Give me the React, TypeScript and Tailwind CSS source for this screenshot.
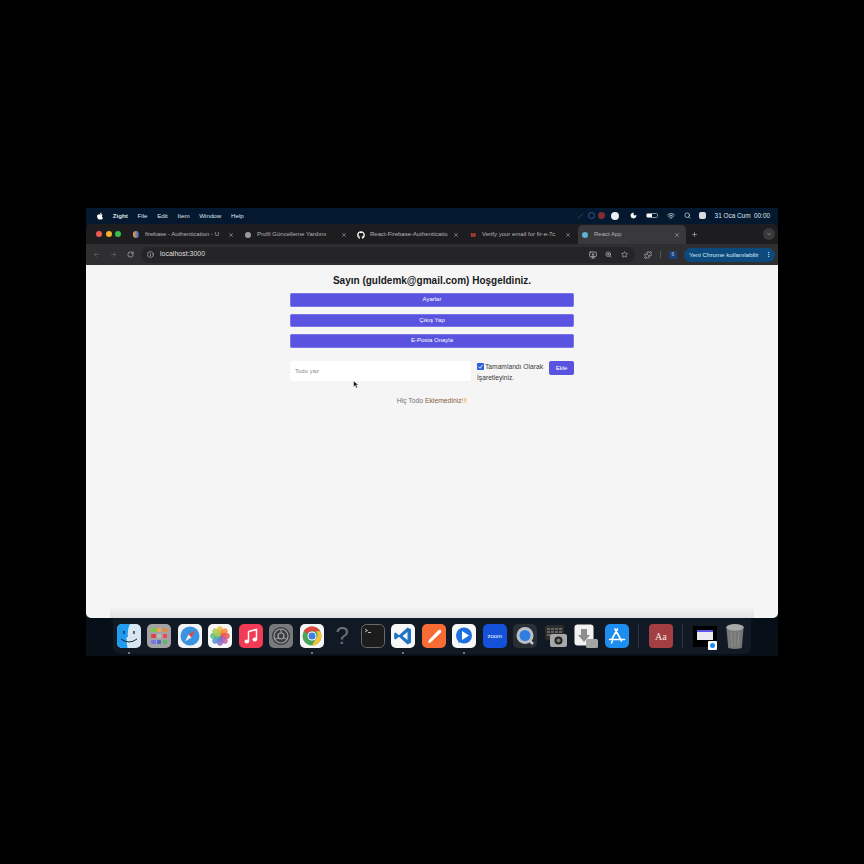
import React from "react";
import { FaApple, FaGithub } from "react-icons/fa";
import {
  X, Plus, ChevronDown, ArrowLeft, ArrowRight, RotateCw, Info, ZoomIn, Star, Puzzle, MoreVertical, Search, Wifi, Moon, MonitorDown,
} from "lucide-react";

const Tab = ({ icon, title, active, w }: { icon: React.ReactNode; title: string; active?: boolean; w: string }) => (
  <div className={`flex h-[19px] shrink-0 items-center gap-[5px] rounded-t-[5px] pl-[3px] ${w} ${active ? "bg-[#39393b] pr-[6px]" : "pr-[7px]"}`}>
    <span className="flex w-[8px] shrink-0 justify-center">{icon}</span>
    <span className="min-w-0 flex-1 overflow-hidden whitespace-nowrap text-[6px] text-[#b4b4b6]">{title}</span>
    <X size={6} className="shrink-0 text-[#c0c0c0]" />
  </div>
);

const Btn = ({ children }: { children: React.ReactNode }) => (
  <div className="flex h-[13.500px] items-center justify-center rounded-[1.500px] border-[0.500px] border-[#7b75e8] bg-[#5a53e0] text-[6px] text-white">{children}</div>
);

const Finder = () => (
  <svg viewBox="0 0 24 24" className="h-6 w-6">
    <rect width="24" height="24" rx="5" fill="#d8e6f2" />
    <path d="M0 5a5 5 0 0 1 5-5h8q-3 6-2 13H9.500q0 6 1 11H5a5 5 0 0 1-5-5z" fill="#1f9cf0" />
    <path d="M4 15q8 6 16 0" stroke="#123" fill="none" />
    <path d="M7 7v3M17 7v3" stroke="#123" strokeWidth="1.300" />
  </svg>
);
const Launchpad = () => {
  const c = ["#7c4","#ea4","#e83","#d44","#bbb","#e45","#77d","#56c","#5b6"];
  return (
    <div className="grid h-6 w-6 grid-cols-3 gap-[1.5px] rounded-[5px] bg-[#a3a3a5] p-[4px]">
      {c.map((x) => <span key={x} className="rounded-[1px]" style={{ background: x }} />)}
    </div>
  );
};
const Safari = () => (
  <svg viewBox="0 0 24 24" className="h-6 w-6">
    <rect width="24" height="24" rx="5" fill="#f2f3f4" />
    <circle cx="12" cy="12" r="9.500" fill="#3a93e0" />
    <path d="M17 6.500l-6.500 4 3 3z" fill="#e8453c" />
    <path d="M7 17.500l3.500-7 3 3z" fill="#eee" />
  </svg>
);
const Photos = () => (
  <svg viewBox="0 0 24 24" className="h-6 w-6">
    <rect width="24" height="24" rx="5" fill="#f7f7f7" />
    {["#f6b73c","#f28c38","#e9574f","#c65aa0","#8a68c8","#4f8fdc","#5cb88a","#a8cf4f"].map((c, i) => (
      <ellipse key={c} cx="12" cy="7" rx="3.200" ry="4.800" fill={c} opacity="0.850" transform={`rotate(${i * 45} 12 12)`} />
    ))}
  </svg>
);
const Music = () => (
  <svg viewBox="0 0 24 24" className="h-6 w-6">
    <rect width="24" height="24" rx="5" fill="#f23c55" />
    <path d="M9.500 7.500l8-2v10" stroke="#fff" strokeWidth="1.500" fill="none" />
    <path d="M9.500 7.500v10" stroke="#fff" strokeWidth="1.500" />
    <ellipse cx="7.800" cy="17.500" rx="2.300" ry="1.900" fill="#fff" />
    <ellipse cx="15.800" cy="15.500" rx="2.300" ry="1.900" fill="#fff" />
  </svg>
);
const Settings = () => (
  <svg viewBox="0 0 24 24" className="h-6 w-6">
    <rect width="24" height="24" rx="5" fill="#77797c" />
    <circle cx="12" cy="12" r="9" fill="#3c3d40" />
    <circle cx="12" cy="12" r="7" fill="none" stroke="#a2a3a6" strokeWidth="1.200" />
    <circle cx="12" cy="12" r="3" fill="none" stroke="#a2a3a6" strokeWidth="1.200" />
    <path d="M12 5v4M6 15.500l3.500-2M18 15.500l-3.500-2" stroke="#a2a3a6" />
  </svg>
);
const Chrome = () => (
  <svg viewBox="0 0 24 24" className="h-6 w-6">
    <rect width="24" height="24" rx="5" fill="#f5f5f5" />
    <circle cx="12" cy="12" r="9.500" fill="#4aa35a" />
    <path d="M12 2.500a9.500 9.500 0 0 1 8.200 4.800H12a4.700 4.700 0 0 0-4.300 2.700L3.900 7A9.500 9.500 0 0 1 12 2.500z" fill="#e0483d" />
    <path d="M20.200 7.300A9.500 9.500 0 0 1 12 21.500l4-7a4.700 4.700 0 0 0 0-7.200z" fill="#f5c33b" />
    <circle cx="12" cy="12" r="4.500" fill="#fff" />
    <circle cx="12" cy="12" r="3.500" fill="#3b7fe0" />
  </svg>
);
const Term = () => (
  <svg viewBox="0 0 24 24" className="h-6 w-6">
    <rect x="0.500" y="0.500" width="23" height="23" rx="5" fill="#1c1c1c" stroke="#6a6a6a" />
    <path d="M4 5l2.500 1.500L4 8" stroke="#ddd" strokeWidth="0.800" fill="none" />
    <path d="M7 8.500h3" stroke="#ddd" strokeWidth="0.800" />
  </svg>
);
const VSCode = () => (
  <svg viewBox="0 0 24 24" className="h-6 w-6">
    <rect width="24" height="24" rx="5" fill="#f7f7f7" />
    <path d="M16.500 3.500l3.500 1.800v13.400l-3.500 1.800-8.500-7.800-3.500 2.800-1.300-.800v-5.400l1.300-.800 3.500 2.800zM16.500 8l-5 4 5 4z" fill="#1f73c4" />
  </svg>
);
const Postman = () => (
  <svg viewBox="0 0 24 24" className="h-6 w-6">
    <rect width="24" height="24" rx="5" fill="#f76b35" />
    <path d="M6 19l1-3L16 6.500q2-1.500 3 0t-1 3L8.500 18.500z" fill="#fff" />
  </svg>
);
const Beam = () => (
  <svg viewBox="0 0 24 24" className="h-6 w-6">
    <rect width="24" height="24" rx="5" fill="#f7f7f7" />
    <circle cx="12" cy="11.500" r="8" fill="#1f6fe0" />
    <path d="M6 20l1.500-5h3z" fill="#1f6fe0" />
    <path d="M10 7l7 4.500-7 4.500z" fill="#fff" />
  </svg>
);
const Zoom = () => (
  <div className="flex h-6 w-6 items-center justify-center rounded-[5px] bg-[#1550d8] text-[6px] text-white">zoom</div>
);
const QuickTime = () => (
  <svg viewBox="0 0 24 24" className="h-6 w-6">
    <rect width="24" height="24" rx="5" fill="#2a2f35" />
    <circle cx="12" cy="11.500" r="8.500" fill="#b9c0c8" />
    <circle cx="12" cy="11.500" r="5.500" fill="#2f7fe0" />
    <path d="M16 16l4 4" stroke="#c2c6cc" strokeWidth="2.500" />
  </svg>
);
const Capture = () => (
  <svg viewBox="0 0 24 24" className="h-6 w-6">
    <rect x="1" y="1" width="19" height="15" rx="3" fill="#2d2d2d" />
    <path d="M3 5h15M3 8h15M3 11h8" stroke="#999" strokeWidth="1.200" strokeDasharray="3 1" />
    <rect x="6" y="10" width="17" height="13" rx="2" fill="#a8a8a8" />
    <circle cx="14.500" cy="16.500" r="4" fill="#222" />
    <circle cx="14.500" cy="16.500" r="2" fill="#777" />
  </svg>
);
const Downloads = () => (
  <svg viewBox="0 0 24 24" className="h-6 w-6">
    <rect x="0.500" y="0.500" width="19" height="21" rx="3" fill="#f2f2f2" />
    <path d="M7 5h6v6h3l-6 7-6-7h3z" fill="#8e8e8e" />
    <rect x="12" y="15" width="12" height="9" rx="1.500" fill="#a5a5a5" />
  </svg>
);
const AppStore = () => (
  <svg viewBox="0 0 24 24" className="h-6 w-6">
    <rect width="24" height="24" rx="5" fill="#1d8df0" />
    <path d="M12.500 5L7 15M10 5l6.500 12M4.500 15.500h15M6.500 19l1-2" stroke="#fff" strokeWidth="1.600" strokeLinecap="round" />
  </svg>
);
const Dict = () => (
  <div className="relative flex h-6 w-6 items-center justify-center rounded-[4px] bg-[#a33f42] font-['Liberation_Serif',serif] text-[10px] text-[#f6e4e4]">Aa</div>
);
const Thumb = () => (
  <div className="relative flex h-[21px] w-[26px] items-center justify-center bg-black">
    <div className="mb-[3px] h-[10px] w-[16px] bg-[#e9e9ef]">
      <div className="h-[2px] bg-[#5c55e6]" />
    </div>
    <span className="absolute -bottom-[3px] right-0 flex h-[9px] w-[9px] items-center justify-center rounded-[1px] bg-white">
      <span className="h-[5px] w-[5px] rounded-full bg-[#1d8df0]" />
    </span>
  </div>
);
const Trash = () => (
  <svg viewBox="0 0 24 28" className="h-[27px] w-6">
    <path d="M3 4h18l-2 22q-7 2-14 0z" fill="#777" />
    <ellipse cx="12" cy="4.500" rx="9" ry="3.500" fill="#aaa" />
    <path d="M8 9l1 16M12 9v16M16 9l-1 16" stroke="#8e8e8e" />
  </svg>
);

const DockItem = ({ children, dot }: { children: React.ReactNode; dot?: boolean }) => (
  <div className="relative flex h-6 w-6 shrink-0 items-center justify-center">
    {children}
    {dot && <span className="absolute -bottom-[6px] left-[11px] h-[2px] w-[2px] rounded-full bg-[#9a9a9a]" />}
  </div>
);

export default function App() {
  return (
    <div className="h-[864px] w-[864px] overflow-hidden bg-black pl-[86px] pt-[208px] font-['Liberation_Sans',sans-serif]">
      <div className="flex h-[448px] w-[692px] flex-col overflow-hidden bg-gradient-to-b from-[#04182f] to-[#070f17]">
        {/* Menu bar */}
        <div className="flex h-[16px] shrink-0 items-center justify-between pl-[10px] pr-[8px] text-[6.200px] text-[#dfe5ea]">
          <div className="flex items-center gap-[9.700px]">
            <FaApple size={8} className="mr-[-1px] text-white" />
            <span className="font-bold">Zight</span>
            <span>File</span>
            <span>Edit</span>
            <span>Item</span>
            <span>Window</span>
            <span>Help</span>
          </div>
          <div className="flex items-center">
            <svg viewBox="0 0 10 10" className="mr-[3.500px] h-2 w-2"><path d="M1 8l7-6" stroke="#2f4a66" /></svg>
            <span className="mr-[3px] h-[7px] w-[7px] rounded-full border border-[#2f5a96]" />
            <span className="mr-[5.500px] h-[7px] w-[7px] rounded-full bg-[#7f2e30]" />
            <span className="mr-[11.500px] h-[8px] w-[8px] rounded-full bg-[#e8edf2]" />
            <Moon size={7} className="mr-[8.500px] fill-white text-white" />
            <span className="mr-[9px] flex h-[5px] w-[12px] rounded-[1.500px] border border-[#8a929a]"><span className="w-[5px] bg-white" /></span>
            <Wifi size={8} className="mr-[9.500px] text-white" />
            <Search size={7} className="mr-[8px] text-white" />
            <span className="mr-[8.500px] h-[7px] w-[7px] rounded-[2px] bg-[#d8dde2]" />
            <span className="whitespace-nowrap text-[6.400px]">31 Oca Cum&nbsp;&nbsp;00:00</span>
          </div>
        </div>

        {/* Browser */}
        <div className="flex h-[394px] shrink-0 flex-col overflow-hidden rounded-[5px]">
          {/* Tab strip */}
          <div className="flex h-[20px] shrink-0 items-end bg-[#1d1d1f] pl-[10px] pr-[3px]">
            <div className="mr-[8px] flex h-full w-[25px] items-center gap-[3.500px]">
              <span className="h-[6px] w-[6px] shrink-0 rounded-full bg-[#ee5a52]" />
              <span className="h-[6px] w-[6px] shrink-0 rounded-full bg-[#f4b02e]" />
              <span className="h-[6px] w-[6px] shrink-0 rounded-full bg-[#35c14a]" />
            </div>
            <Tab w="w-[112px]" title="firebase - Authentication - U" icon={<span className="h-[7px] w-[6px] rounded-full bg-gradient-to-r from-[#f59e0b] to-[#2451c9]" />} />
            <Tab w="w-[113px]" title="Profil Güncelleme Yardımı" icon={<span className="h-[6px] w-[6px] rounded-full bg-[#9a9a9a]" />} />
            <Tab w="w-[112px]" title="React-Firebase-Authenticatio" icon={<FaGithub size={8} className="text-white" />} />
            <Tab w="w-[112px]" title="Verify your email for fir-e-7c" icon={<span className="text-[6px] font-bold leading-none text-[#e0483d]">M</span>} />
            <Tab active w="w-[108px]" title="React App" icon={<span className="h-[6px] w-[6px] rounded-full bg-[#5ab4d6]" />} />
            <Plus size={7} className="mb-[6px] ml-[5px] text-[#c8c8c8]" />
            <span className="mb-[4px] ml-auto flex h-[12px] w-[12px] items-center justify-center rounded-full bg-[#39393b]">
              <ChevronDown size={6} className="text-[#ccc]" />
            </span>
          </div>

          {/* Toolbar */}
          <div className="flex h-[21px] shrink-0 items-center bg-[#2f2f31] pl-[7px] pr-[3px] text-[#9b9b9d]">
            <ArrowLeft size={7} className="text-[#6f6f71]" />
            <ArrowRight size={7} className="ml-[10px] text-[#6f6f71]" />
            <RotateCw size={7} className="ml-[10px] text-[#d0d0d0]" />
            <div className="ml-[7px] flex h-[16px] w-[494px] items-center rounded-full bg-[#252527] pl-[6px] pr-[7px]">
              <Info size={7} className="text-[#d0d0d0]" />
              <span className="ml-[6px] text-[7px] font-normal text-[#dedede]">localhost:3000</span>
              <MonitorDown size={8} className="ml-auto text-[#d0d0d0]" />
              <ZoomIn size={7} className="ml-[8px] text-[#d0d0d0]" />
              <Star size={7} className="ml-[9px] text-[#d0d0d0]" />
            </div>
            <Puzzle size={8} className="ml-[9px] text-[#d0d0d0]" />
            <span className="ml-[8px] h-[7px] w-px bg-[#555]" />
            <span className="ml-[8px] flex h-[8px] w-[8px] items-center justify-center rounded-[1px] bg-[#1d3f77] text-[5px] text-[#b6d0f5]">6</span>
            <div className="ml-[7px] flex h-[14px] flex-1 items-center justify-between rounded-full bg-[#0c4a7d] pl-[5px] pr-[3px] text-[6.200px] text-[#d8e8f5]">
              <span className="whitespace-nowrap">Yeni Chrome kullanılabilir</span>
              <MoreVertical size={7} />
            </div>
          </div>

          {/* Page */}
          <div className="relative flex min-h-0 flex-1 flex-col items-center bg-[#f5f5f5]">
            <div className="w-[284px]">
              <h1 className="mt-[8.500px] h-[13px] whitespace-nowrap text-center text-[10px] font-bold leading-[13px] text-[#18181b]">
                Sayın (guldemk@gmail.com) Hoşgeldiniz.
              </h1>
              <div className="mt-[6.500px] flex flex-col gap-[7px]">
                <Btn>Ayarlar</Btn>
                <Btn>Çıkış Yap</Btn>
                <Btn>E-Posta Onayla</Btn>
              </div>
              <div className="mt-[13.500px] flex items-start">
                <div className="flex h-[20px] w-[181px] shrink-0 items-center rounded-[3px] bg-white pl-[5px] text-[6px] text-[#8b8b8b]">Todo yaz</div>
                <div className="ml-[6px] w-[72px] shrink-0 text-[6.700px] leading-[11px] text-[#3a3a3e]">
                  <span className="mr-px inline-block h-[7px] w-[7px] rounded-[1px] bg-[#2f5fd8] align-[-1px]">
                    <svg viewBox="0 0 8 8" className="h-[7px] w-[7px]"><path d="M1.500 4l2 2 3-4" stroke="#fff" fill="none" /></svg>
                  </span>
                  Tamamlandı Olarak İşaretleyiniz.
                </div>
                <div className="flex h-[14px] flex-1 items-center justify-center rounded-[2px] bg-[#5a53e0] text-[6px] text-white">Ekle</div>
              </div>
              <p className="mt-[13px] text-center text-[6.800px] text-[#71717a]">
                Hiç Todo <span className="text-[#8f5a40]">Eklemediniz</span><span className="text-[#e0a040]">!!!</span>
              </p>
            </div>
            <svg viewBox="0 0 10 14" className="absolute left-[267px] top-[115px] h-[9px] w-[6px]">
              <path d="M1 1v10l2.500-2.500L5.500 13l2-1-2-4.300H9z" fill="#111" stroke="#fff" strokeWidth="0.800" />
            </svg>
            <div className="mx-[24px] mt-auto h-[12px] self-stretch bg-gradient-to-b from-[#f5f5f5] to-[#e2e2e2]" />
          </div>
        </div>

        {/* Dock */}
        <div className="flex flex-1 justify-center">
          <div className="flex h-[36px] items-start gap-[6.500px] rounded-b-[7px] bg-[#111a24] px-[4px] pt-[6px]">
            <DockItem dot><Finder /></DockItem>
            <DockItem><Launchpad /></DockItem>
            <DockItem><Safari /></DockItem>
            <DockItem><Photos /></DockItem>
            <DockItem><Music /></DockItem>
            <DockItem><Settings /></DockItem>
            <DockItem dot><Chrome /></DockItem>
            <DockItem><span className="text-[24px] leading-6 text-[#6a6f74]">?</span></DockItem>
            <DockItem><Term /></DockItem>
            <DockItem dot><VSCode /></DockItem>
            <DockItem><Postman /></DockItem>
            <DockItem dot><Beam /></DockItem>
            <DockItem><Zoom /></DockItem>
            <DockItem><QuickTime /></DockItem>
            <DockItem><Capture /></DockItem>
            <DockItem><Downloads /></DockItem>
            <DockItem><AppStore /></DockItem>
            <span className="mx-[3px] h-6 w-px bg-[#2a3642]" />
            <DockItem><Dict /></DockItem>
            <span className="mx-[3px] h-6 w-px bg-[#2a3642]" />
            <DockItem><Thumb /></DockItem>
            <DockItem><Trash /></DockItem>
          </div>
        </div>
      </div>
    </div>
  );
}
